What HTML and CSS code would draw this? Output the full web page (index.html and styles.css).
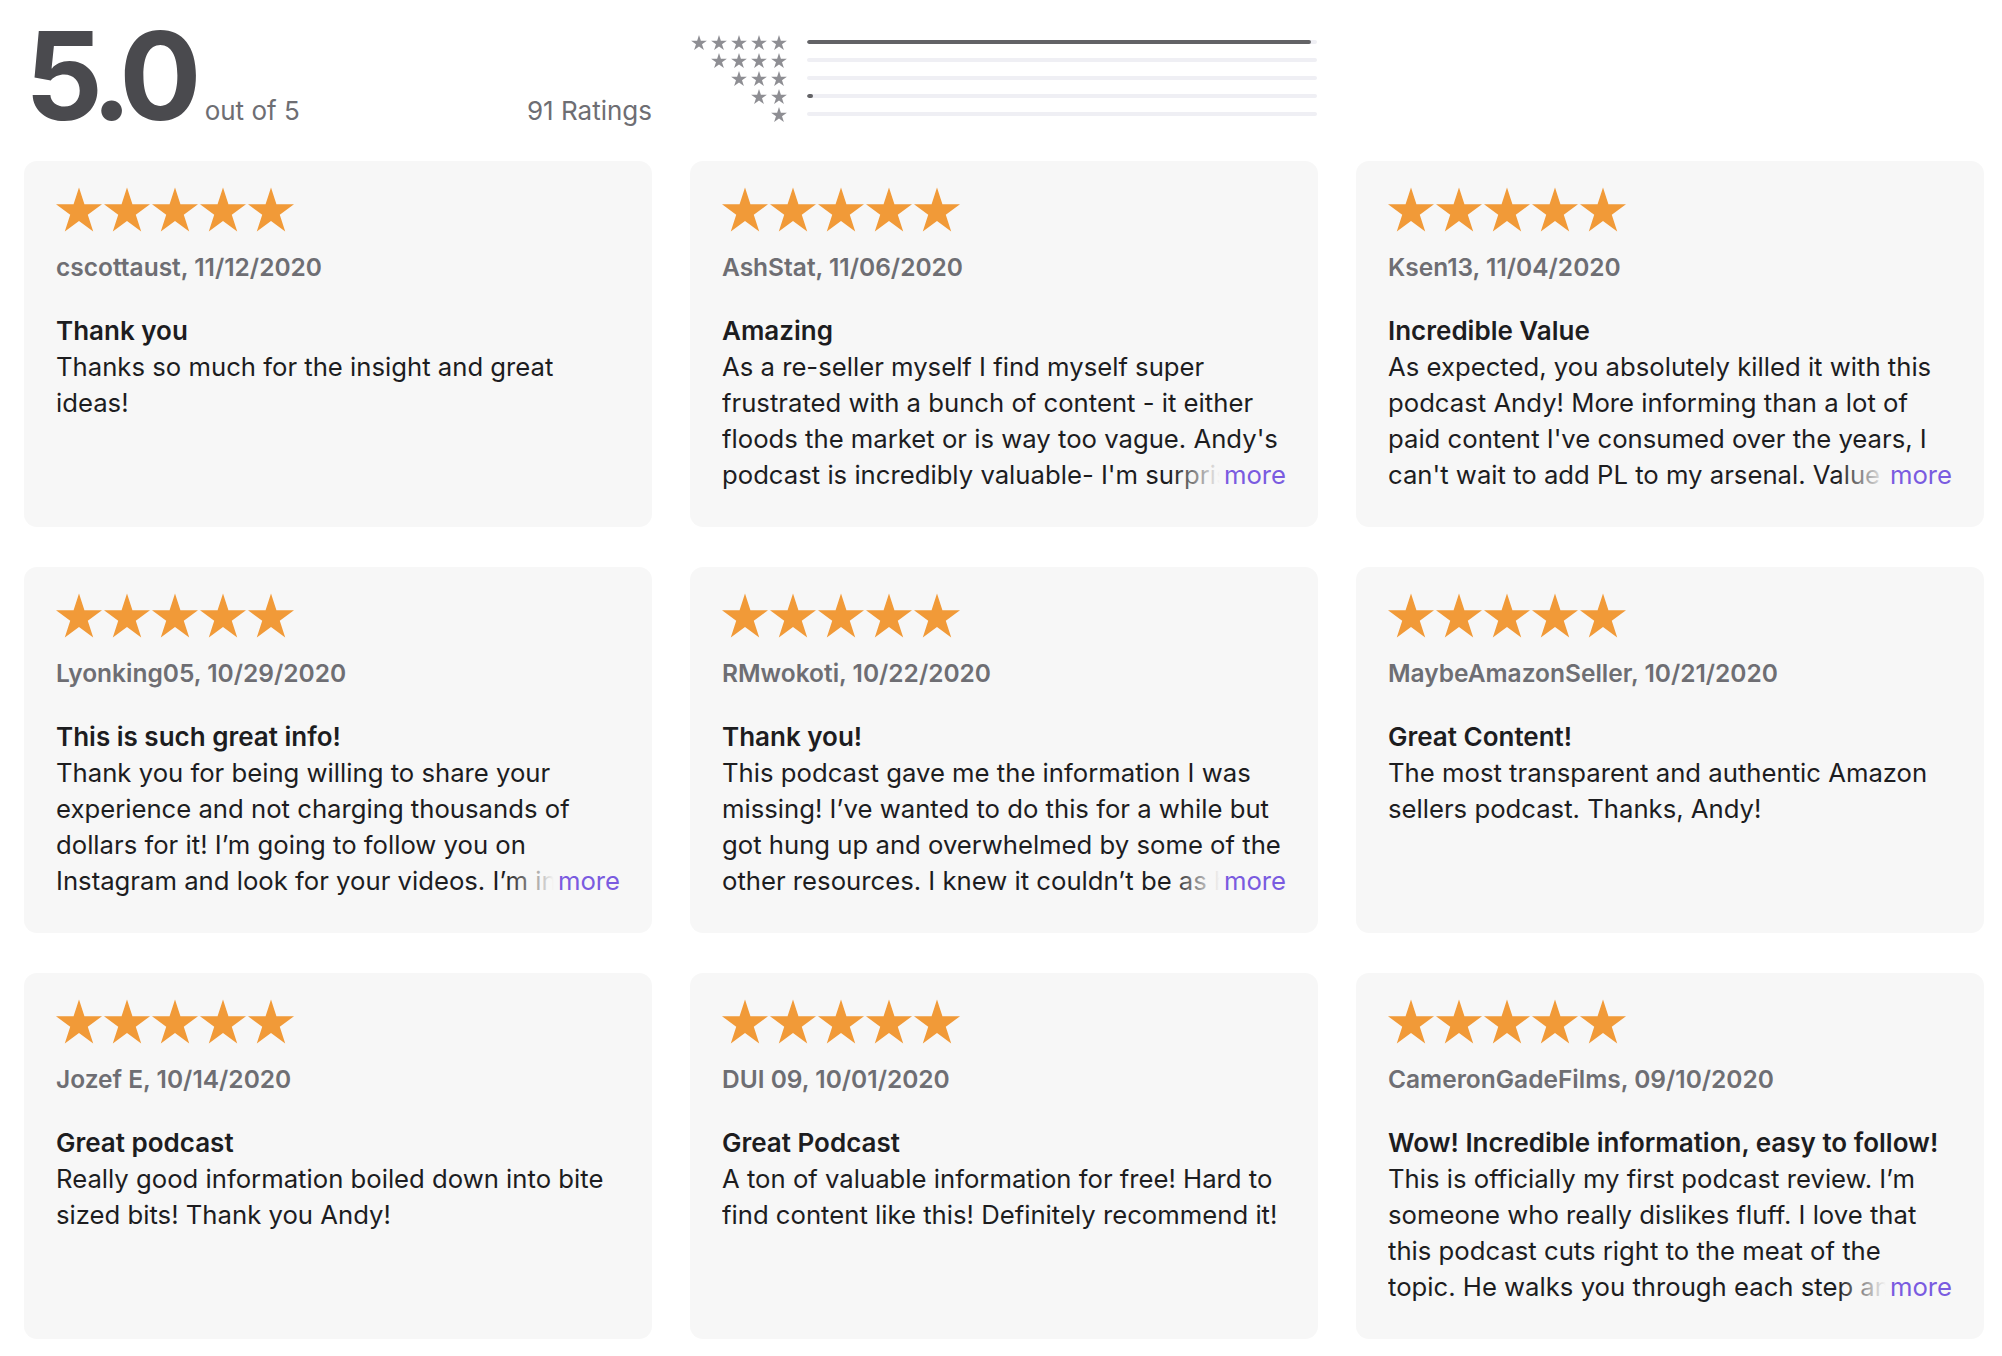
FILE: index.html
```html
<!DOCTYPE html>
<html lang="en">
<head>
    <meta charset="UTF-8">
    <title>Ratings and Reviews</title>
    <link rel="stylesheet" href="styles.css">
</head>
<body>
    <svg class="defs" width="0" height="0">
        <symbol id="star" viewBox="2.45 0 95.1 90.45">
            <polygon points="50,0 61.23,34.55 97.55,34.55 68.16,55.9 79.39,90.45 50,69.1 20.61,90.45 31.84,55.9 2.45,34.55 38.77,34.55"/>
        </symbol>
    </svg>

    <div class="reviews-page">
        <div class="ratings-header">
            <div class="summary">
                <div class="score">
                    <span class="score-value">5.0</span>
                    <span class="score-out">out of 5</span>
                </div>
                <div class="score-count">91 Ratings</div>
            </div>

            <div class="histogram">
                <div class="hist-stars"><svg><use href="#star"/></svg><svg><use href="#star"/></svg><svg><use href="#star"/></svg><svg><use href="#star"/></svg><svg><use href="#star"/></svg></div>
                <div class="hist-bar"><div class="hist-fill" style="width: 98.9%"></div></div>
                <div class="hist-stars"><svg><use href="#star"/></svg><svg><use href="#star"/></svg><svg><use href="#star"/></svg><svg><use href="#star"/></svg></div>
                <div class="hist-bar"><div class="hist-fill" style="width: 0%"></div></div>
                <div class="hist-stars"><svg><use href="#star"/></svg><svg><use href="#star"/></svg><svg><use href="#star"/></svg></div>
                <div class="hist-bar"><div class="hist-fill" style="width: 0%"></div></div>
                <div class="hist-stars"><svg><use href="#star"/></svg><svg><use href="#star"/></svg></div>
                <div class="hist-bar"><div class="hist-fill" style="width: 1.1%"></div></div>
                <div class="hist-stars"><svg><use href="#star"/></svg></div>
                <div class="hist-bar"><div class="hist-fill" style="width: 0%"></div></div>
            </div>
        </div>

        <div class="review-grid">
            <div class="review-card">
                <div class="review-stars"><svg><use href="#star"/></svg><svg><use href="#star"/></svg><svg><use href="#star"/></svg><svg><use href="#star"/></svg><svg><use href="#star"/></svg></div>
                <div class="review-author">cscottaust, 11/12/2020</div>
                <h3 class="review-title">Thank you</h3>
                <div class="review-body">
                    <p>Thanks so much for the insight and great ideas!</p>
                </div>
            </div>

            <div class="review-card">
                <div class="review-stars"><svg><use href="#star"/></svg><svg><use href="#star"/></svg><svg><use href="#star"/></svg><svg><use href="#star"/></svg><svg><use href="#star"/></svg></div>
                <div class="review-author">AshStat, 11/06/2020</div>
                <h3 class="review-title">Amazing</h3>
                <div class="review-body">
                    <p>As a re-seller myself I find myself super frustrated with a bunch of content - it either floods the market or is way too vague. Andy's podcast is incredibly valuable- I'm surprised he shares this much for free. Highly recommend it to anyone starting out.</p>
                    <a class="more-link" href="#">more</a>
                </div>
            </div>

            <div class="review-card">
                <div class="review-stars"><svg><use href="#star"/></svg><svg><use href="#star"/></svg><svg><use href="#star"/></svg><svg><use href="#star"/></svg><svg><use href="#star"/></svg></div>
                <div class="review-author">Ksen13, 11/04/2020</div>
                <h3 class="review-title">Incredible Value</h3>
                <div class="review-body">
                    <p>As expected, you absolutely killed it with this podcast Andy! More informing than a lot of paid content I've consumed over the years, I can't wait to add PL to my arsenal. Value packed episodes every single week.</p>
                    <a class="more-link" href="#">more</a>
                </div>
            </div>

            <div class="review-card">
                <div class="review-stars"><svg><use href="#star"/></svg><svg><use href="#star"/></svg><svg><use href="#star"/></svg><svg><use href="#star"/></svg><svg><use href="#star"/></svg></div>
                <div class="review-author">Lyonking05, 10/29/2020</div>
                <h3 class="review-title">This is such great info!</h3>
                <div class="review-body">
                    <p>Thank you for being willing to share your experience and not charging thousands of dollars for it! I’m going to follow you on Instagram and look for your videos. I’m in this for the long haul now.</p>
                    <a class="more-link" href="#">more</a>
                </div>
            </div>

            <div class="review-card">
                <div class="review-stars"><svg><use href="#star"/></svg><svg><use href="#star"/></svg><svg><use href="#star"/></svg><svg><use href="#star"/></svg><svg><use href="#star"/></svg></div>
                <div class="review-author">RMwokoti, 10/22/2020</div>
                <h3 class="review-title">Thank you!</h3>
                <div class="review-body">
                    <p>This podcast gave me the information I was missing! I’ve wanted to do this for a while but got hung up and overwhelmed by some of the other resources. I knew it couldn’t be as hard as everyone made it seem.</p>
                    <a class="more-link" href="#">more</a>
                </div>
            </div>

            <div class="review-card">
                <div class="review-stars"><svg><use href="#star"/></svg><svg><use href="#star"/></svg><svg><use href="#star"/></svg><svg><use href="#star"/></svg><svg><use href="#star"/></svg></div>
                <div class="review-author">MaybeAmazonSeller, 10/21/2020</div>
                <h3 class="review-title">Great Content!</h3>
                <div class="review-body">
                    <p>The most transparent and authentic Amazon sellers podcast. Thanks, Andy!</p>
                </div>
            </div>

            <div class="review-card">
                <div class="review-stars"><svg><use href="#star"/></svg><svg><use href="#star"/></svg><svg><use href="#star"/></svg><svg><use href="#star"/></svg><svg><use href="#star"/></svg></div>
                <div class="review-author">Jozef E, 10/14/2020</div>
                <h3 class="review-title">Great podcast</h3>
                <div class="review-body">
                    <p>Really good information boiled down into bite sized bits! Thank you Andy!</p>
                </div>
            </div>

            <div class="review-card">
                <div class="review-stars"><svg><use href="#star"/></svg><svg><use href="#star"/></svg><svg><use href="#star"/></svg><svg><use href="#star"/></svg><svg><use href="#star"/></svg></div>
                <div class="review-author">DUI 09, 10/01/2020</div>
                <h3 class="review-title">Great Podcast</h3>
                <div class="review-body">
                    <p>A ton of valuable information for free! Hard to find content like this! Definitely recommend it!</p>
                </div>
            </div>

            <div class="review-card">
                <div class="review-stars"><svg><use href="#star"/></svg><svg><use href="#star"/></svg><svg><use href="#star"/></svg><svg><use href="#star"/></svg><svg><use href="#star"/></svg></div>
                <div class="review-author">CameronGadeFilms, 09/10/2020</div>
                <h3 class="review-title">Wow! Incredible information, easy to follow!</h3>
                <div class="review-body">
                    <p>This is officially my first podcast review. I’m someone who really dislikes fluff. I love that this podcast cuts right to the meat of the topic. He walks you through each step and explains why it matters.</p>
                    <a class="more-link" href="#">more</a>
                </div>
            </div>
        </div>
    </div>
</body>
</html>
```

FILE: styles.css
```css
body {
    margin: 0;
    background: #ffffff;
    font-family: Inter, "Noto Sans", sans-serif;
    color: #1d1d1f;
}

.defs {
    position: absolute;
}

.reviews-page {
    padding: 0 18px 0 24px;
}

/* header */

.ratings-header {
    display: flex;
    height: 161px;
}

.summary {
    width: 628px;
    display: flex;
    justify-content: space-between;
    align-items: baseline;
    padding-top: 15px;
    box-sizing: border-box;
    height: 130px;
}

.score {
    display: flex;
    align-items: baseline;
}

.score-value {
    font-size: 122px;
    font-weight: 700;
    letter-spacing: -9px;
    line-height: 1;
    color: #4a4a4e;
    margin-left: 1px;
}

.score-out {
    font-size: 26px;
    color: #6e6e73;
    margin-left: 12px;
}

.score-count {
    font-size: 26px;
    color: #6e6e73;
}

.histogram {
    margin-left: 38px;
    padding-top: 33px;
    display: grid;
    grid-template-columns: 97px 510px;
    grid-auto-rows: 18px;
    column-gap: 20px;
    align-items: center;
}

.hist-stars {
    display: flex;
    justify-content: flex-end;
    gap: 4px;
}

.hist-stars svg {
    width: 16px;
    height: 15px;
    fill: #8e8e93;
}

.hist-bar {
    height: 4px;
    background: #efeff4;
    border-radius: 2px;
    overflow: hidden;
}

.hist-fill {
    height: 100%;
    background: #636366;
    border-radius: 2px;
}

/* reviews */

.review-grid {
    display: grid;
    grid-template-columns: repeat(3, 628px);
    grid-auto-rows: 366px;
    column-gap: 38px;
    row-gap: 40px;
}

.review-card {
    background: #f7f7f7;
    border-radius: 13px;
    padding: 26px 32px 0;
}

.review-stars {
    display: flex;
    gap: 2px;
    height: 46px;
}

.review-stars svg {
    width: 46px;
    height: 45px;
    fill: #f19a38;
}

.review-author {
    margin-top: 19px;
    font-size: 24.5px;
    line-height: 30px;
    font-weight: 600;
    color: #6e6e73;
}

.review-title {
    margin: 31px 0 0;
    font-size: 26px;
    line-height: 36px;
    font-weight: 600;
    color: #1d1d1f;
}

.review-body {
    position: relative;
    max-height: 144px;
    overflow: hidden;
}

.review-body p {
    margin: 0;
    font-size: 25.7px;
    line-height: 36px;
}

.more-link {
    position: absolute;
    right: 0;
    bottom: 0;
    padding-left: 52px;
    font-size: 25.7px;
    line-height: 36px;
    color: #7a5be0;
    text-decoration: none;
    background: linear-gradient(to right, rgba(247, 247, 247, 0), #f7f7f7 48px);
}
```
